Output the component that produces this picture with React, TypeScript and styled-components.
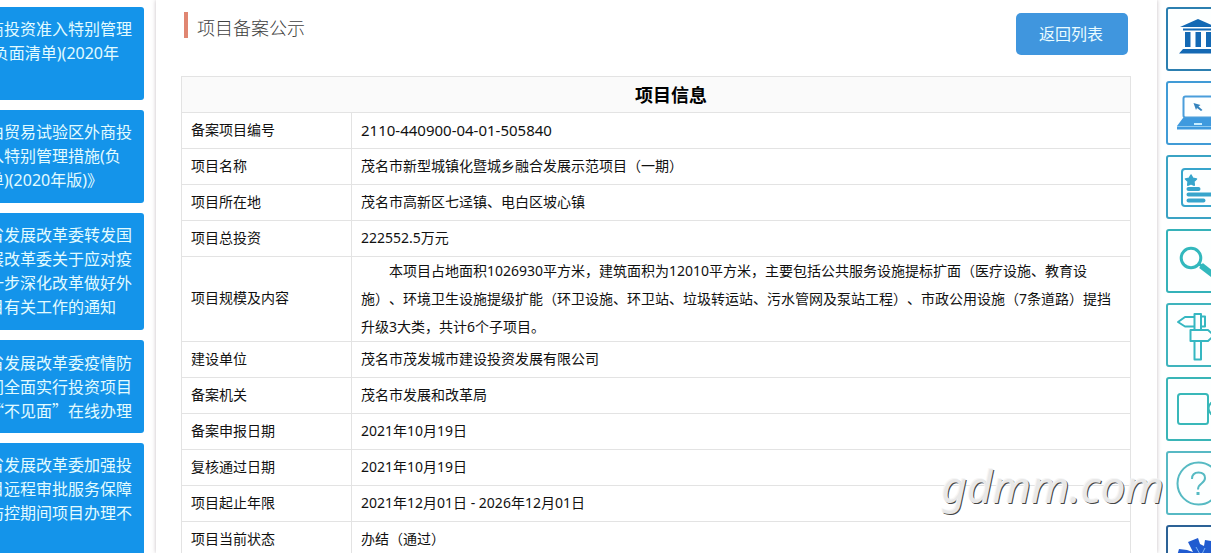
import React from "react";
import styled, { createGlobalStyle } from "styled-components";

const GlobalStyle = createGlobalStyle`
  * { box-sizing: border-box; }
  body {
    margin: 0;
    background: #fff;
    color: #111;
    font-family: "Noto Sans", "Noto Sans CJK SC", sans-serif;
    font-size: 14px;
    text-spacing-trim: space-all;
  }
`;

const Page = styled.div`
  display: flex;
  height: 100vh;
  overflow: hidden;
`;

const NoticeList = styled.aside`
  flex: none;
  display: flex;
  flex-direction: column;
  gap: 10px;
  width: 168px;
  margin: 0 12px 0 -24px;
  padding-top: 7px;
`;

const NoticeCard = styled.a<{ $lines: number; $wideQuotes?: boolean }>`
  flex: none;
  display: block;
  min-height: ${(p) => p.$lines * 24 + 21}px;
  padding: 10px 12px 11px;
  border-radius: 3px;
  background: #1494ea;
  color: #e2fbff;
  font-family: ${(p) =>
    p.$wideQuotes
      ? '"Noto Sans CJK SC", sans-serif'
      : '"Noto Sans", "Noto Sans CJK SC", sans-serif'};
  font-size: 16px;
  line-height: 24px;
  text-decoration: none;
  white-space: nowrap;
`;

const NoticeLine = styled.span`
  display: block;
`;

const Panel = styled.main`
  flex: 1;
  min-width: 0;
  padding: 12px 26px 0 25px;
  background: #fff;
  box-shadow: 0 0 4px rgba(90, 70, 80, 0.35);
`;

const PanelHeader = styled.header`
  display: flex;
  align-items: flex-start;
  justify-content: space-between;
  height: 64px;
  padding: 0 3px;
`;

const Title = styled.h1`
  display: flex;
  align-items: center;
  height: 26px;
  margin: 0;
  padding: 6px 0 0 9px;
  border-left: 4px solid #e08672;
  color: #404040;
  font-size: 18px;
  font-weight: 300;
  line-height: 26px;
`;

const BackButton = styled.button`
  width: 112px;
  height: 42px;
  margin-top: 1px;
  padding: 0 2px 2px 0;
  border: 0;
  border-radius: 5px;
  background: #4096de;
  color: #eafcff;
  font-family: inherit;
  font-size: 16px;
`;

const InfoTable = styled.table`
  width: 100%;
  border-collapse: collapse;
  table-layout: fixed;
  color: #111;
`;

const Caption = styled.th`
  height: 36px;
  padding: 0 0 0 30px;
  border: 1px solid #e3e3e3;
  background: #fafafa;
  color: #000;
  font-size: 18px;
  font-weight: 700;
  line-height: 28px;
`;

const Label = styled.th`
  width: 170px;
  height: 36px;
  padding: 0 10px 2px 9px;
  border: 1px solid #e3e3e3;
  font-weight: 400;
  line-height: 28px;
  text-align: left;
`;

const Value = styled.td<{ $large?: boolean; $long?: boolean }>`
  padding: ${(p) => (p.$long ? "0 10px 0 9px" : "0 10px 2px 9px")};
  border: 1px solid #e3e3e3;
  font-size: ${(p) => (p.$large ? 15 : 14)}px;
  line-height: 28px;
`;

const Paragraph = styled.p`
  margin: 0;
  text-indent: 28px;
`;

const Rail = styled.nav`
  flex: 0 0 45px;
  display: flex;
  flex-direction: column;
  gap: 10px;
  margin-left: 9px;
  padding-top: 7px;
  overflow: hidden;
`;

const RailButton = styled.button<{ $color: string }>`
  flex: none;
  width: 64px;
  height: 64px;
  padding: 0;
  border: 2px solid ${(p) => p.$color};
  border-radius: 3px;
  background: #fdffff;
`;

const Icon = styled.svg`
  display: block;
  width: 60px;
  height: 60px;
`;

const Watermark = styled.div`
  position: absolute;
  right: 47px;
  bottom: 39px;
  color: #e8e8e8;
  font-family: "Noto Sans", sans-serif;
  font-size: 44px;
  font-style: italic;
  line-height: 56px;
  text-shadow: -1px -1px 0 #f6f6f6, 1px 1px 0 #444;
  pointer-events: none;
`;

const notices = [
  { rows: 3, lines: ["商投资准入特别管理", "(负面清单)(2020年"] },
  { rows: 3, lines: ["由贸易试验区外商投", "入特别管理措施(负", "单)(2020年版)》"] },
  {
    rows: 4,
    lines: ["省发展改革委转发国", "展改革委关于应对疫", "一步深化改革做好外", "目有关工作的通知"],
  },
  { rows: 3, wide: true, lines: ["省发展改革委疫情防", "间全面实行投资项目", "“不见面”在线办理"] },
  { rows: 4, lines: ["省发展改革委加强投", "目远程审批服务保障", "防控期间项目办理不"] },
];

const rows: { label: string; value: string; large?: boolean; long?: boolean }[] = [
  { label: "备案项目编号", value: "2110-440900-04-01-505840", large: true },
  { label: "项目名称", value: "茂名市新型城镇化暨城乡融合发展示范项目（一期）" },
  { label: "项目所在地", value: "茂名市高新区七迳镇、电白区坡心镇" },
  { label: "项目总投资", value: "222552.5万元" },
  {
    label: "项目规模及内容",
    long: true,
    value:
      "本项目占地面积1026930平方米，建筑面积为12010平方米，主要包括公共服务设施提标扩面（医疗设施、教育设施）、环境卫生设施提级扩能（环卫设施、环卫站、垃圾转运站、污水管网及泵站工程）、市政公用设施（7条道路）提挡升级3大类，共计6个子项目。",
  },
  { label: "建设单位", value: "茂名市茂发城市建设投资发展有限公司" },
  { label: "备案机关", value: "茂名市发展和改革局" },
  { label: "备案申报日期", value: "2021年10月19日" },
  { label: "复核通过日期", value: "2021年10月19日" },
  { label: "项目起止年限", value: "2021年12月01日 - 2026年12月01日" },
  { label: "项目当前状态", value: "办结（通过）" },
];

const railItems: { name: string; color: string; art: React.ReactNode }[] = [
  {
    name: "政府机构",
    color: "#2c7fb0",
    art: (
      <g fill="#1369b4">
        <path d="M14 20 32 12 50 20z" />
        <path d="M17 21.5h30v2H17zM19 25h5.500v15H19zM29.500 25H35v15h-5.500zM40 25h5.500v15H40zM17 42h30l4 4.500H13z" />
      </g>
    ),
  },
  {
    name: "网上办事",
    color: "#409bd6",
    art: (
      <g>
        <rect x="17.500" y="15.500" width="29" height="21" rx="2" fill="none" stroke="#4a9edb" strokeWidth="2" />
        <path d="M17 37h30l6 8v3.500H11V45z" fill="#3f9ade" />
        <path d="M11 45.500h42" stroke="#8fcaf0" strokeWidth="1" />
        <path d="M28 43h8" stroke="#c8edff" strokeWidth="2" />
        <path d="m27.500 22 7 2-2 1.500 4 3.500-1.500 1-4-3-1 2z" fill="#3684bd" />
      </g>
    ),
  },
  {
    name: "项目公示",
    color: "#3aa3c4",
    art: (
      <g fill="none" stroke="#37a5cc" strokeLinecap="round">
        <rect x="16" y="14" width="34" height="37" rx="3" strokeWidth="2" />
        <path d="m25 20 1.800 3.200 3.700.7-2.600 2.700.4 3.600-3.300-1.500-3.300 1.500.4-3.600-2.600-2.700 3.700-.7z" fill="#37a5cc" strokeWidth="1.500" strokeLinejoin="round" />
        <path d="M22.500 34h10M22.500 39.500h23M22.500 45.500h15" strokeWidth="4" />
      </g>
    ),
  },
  {
    name: "进度查询",
    color: "#35b2b9",
    art: (
      <g fill="none" stroke="#32b8bd">
        <circle cx="25" cy="29" r="9.800" strokeWidth="3" />
        <path d="m33 35 3 2" strokeWidth="3" />
        <path d="m35 36.500 13 10" strokeWidth="6" />
      </g>
    ),
  },
  {
    name: "办事指南",
    color: "#3fb4bd",
    art: (
      <g fill="none" stroke="#35b7c1" strokeWidth="2" strokeLinejoin="round">
        <path d="M28 14H19l-7 5 7 4.500h9M35 13.500h4v10h-4" />
        <path d="M28.500 27V11H35v16M28.500 38v18.500H35V38" />
        <path d="M24.500 27H42l6 5.500-6 5.500H24.500z" />
      </g>
    ),
  },
  {
    name: "视频",
    color: "#3ab5b7",
    art: (
      <g fill="none" stroke="#38b8b9" strokeWidth="2">
        <rect x="12" y="17" width="30" height="30" rx="2.500" />
        <path d="M54 19 45 26q-5 5 0 11l9 7z" />
      </g>
    ),
  },
  {
    name: "常见问题",
    color: "#56b9c4",
    art: (
      <g fill="none" stroke="#56bac3" strokeWidth="2">
        <circle cx="32.500" cy="32.500" r="21" />
        <path d="M26 28q0-6.500 6.500-6.500t6.500 5.500q0 3-3.500 5.500t-3.500 6" />
        <path d="M32 41v3" strokeWidth="3" />
      </g>
    ),
  },
  {
    name: "其他服务",
    color: "#2c6296",
    art: (
      <g>
        <path
          d="M22 17 32 13 34 19 38 21 39 15 50 17 47 29 56 38 48 46 32 50 18 44 18 33 11 31 13 24 21 25 27 27z"
          fill="#205bd0"
        />
        <path d="m30 22 5 9 4-8" fill="none" stroke="#7db4f2" strokeWidth="1" />
      </g>
    ),
  },
];

export default function App() {
  return (
    <>
      <GlobalStyle />
      <Page>
        <NoticeList>
          {notices.map((n, i) => (
            <NoticeCard key={i} href="#" $lines={n.rows} $wideQuotes={n.wide}>
              {n.lines.map((line) => (
                <NoticeLine key={line}>{line}</NoticeLine>
              ))}
            </NoticeCard>
          ))}
        </NoticeList>

        <Panel>
          <PanelHeader>
            <Title>项目备案公示</Title>
            <BackButton type="button">返回列表</BackButton>
          </PanelHeader>
          <InfoTable>
            <colgroup>
              <col width="170" />
              <col />
            </colgroup>
            <thead>
              <tr>
                <Caption colSpan={2}>项目信息</Caption>
              </tr>
            </thead>
            <tbody>
              {rows.map((r) => (
                <tr key={r.label}>
                  <Label scope="row">{r.label}</Label>
                  <Value $large={r.large} $long={r.long}>
                    {r.long ? <Paragraph>{r.value}</Paragraph> : r.value}
                  </Value>
                </tr>
              ))}
            </tbody>
          </InfoTable>
        </Panel>

        <Rail>
          {railItems.map((item) => (
            <RailButton key={item.name} type="button" $color={item.color} aria-label={item.name}>
              <Icon viewBox="2 2 60 60" aria-hidden="true">
                {item.art}
              </Icon>
            </RailButton>
          ))}
        </Rail>
      </Page>
      <Watermark>gdmm.com</Watermark>
    </>
  );
}
